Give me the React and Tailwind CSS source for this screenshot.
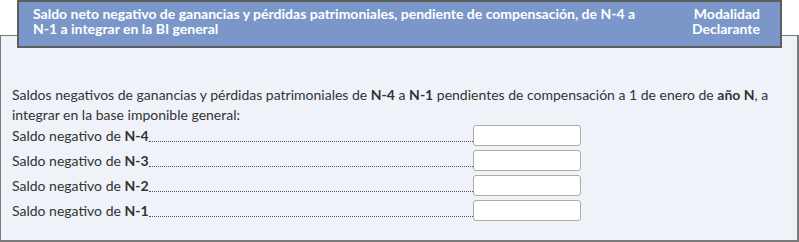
import React from 'react';

const ROWS = ['N-4', 'N-3', 'N-2', 'N-1'];

const App = () => {
  return (
    <main className="w-[799px] h-[242px] bg-white text-[#333] font-['Lato','Liberation_Sans',sans-serif] text-[14px]">
      {/* HEADER */}
      <div className="relative z-10 ml-[17px] w-[765px] h-[48px] bg-[#7b97c9] border-2 border-[#5e5e5e] pl-[14px] pr-[20px] pt-[4px] flex justify-between text-white font-bold leading-[15px]">
        <div className="w-[620px]">
          Saldo neto negativo de ganancias y pérdidas patrimoniales, pendiente de compensación, de N-4 a N-1 a integrar en la BI general
        </div>
        <div className="text-right">
          Modalidad
          <br />
          Declarante
        </div>
      </div>

      {/* PANEL */}
      <section className="-mt-[13px] w-[799px] h-[207px] bg-[#eff2f9] border-l border-t border-r-2 border-b-2 border-[#7a7a7a] pl-[11px] pr-[8px] pt-[49px]">
        <p className="leading-[20px]">
          Saldos negativos de ganancias y pérdidas patrimoniales de <b>N-4</b> a <b>N-1</b> pendientes de compensación a 1 de enero de <b>año N</b>, a
          <br />
          integrar en la base imponible general:
        </p>
        <div className="flex flex-col gap-[4px]">
          {ROWS.map((r) => (
            <div key={r} className="flex items-center h-[21px]">
              <div className="w-[461px] flex items-end">
                <span className="whitespace-nowrap">
                  Saldo negativo de <b>{r}</b>
                </span>
                <span className="flex-1 border-b border-dotted border-[#555] mb-[4px]" />
              </div>
              <input className="w-[108px] h-[21px] rounded-[3px] border border-[#ababab] bg-white outline-none" />
            </div>
          ))}
        </div>
      </section>
    </main>
  );
};

export default App;
